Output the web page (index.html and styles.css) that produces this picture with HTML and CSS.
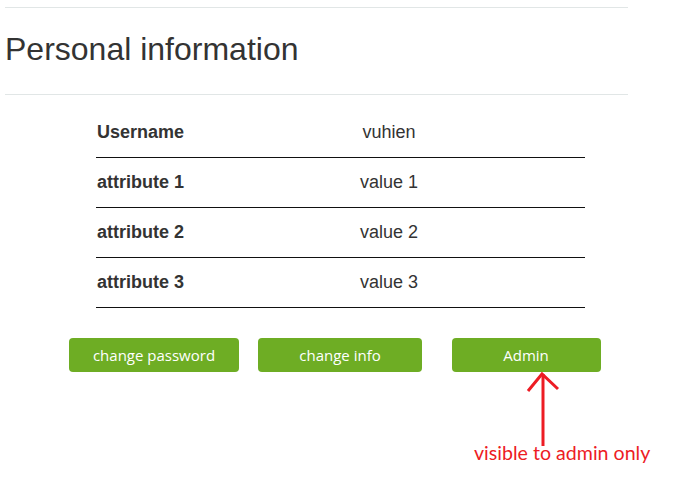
FILE: index.html
```html
<!DOCTYPE html>
<html>
<head>
<meta charset="utf-8">
<link rel="stylesheet" href="styles.css">
</head>
<body>
<div class="page">
  <hr class="rule">
  <h2 class="title">Personal information</h2>
  <hr class="rule">
  <table class="info">
    <tr><td class="attr">Username</td><td class="val">vuhien</td></tr>
    <tr><td class="attr">attribute 1</td><td class="val">value 1</td></tr>
    <tr><td class="attr">attribute 2</td><td class="val">value 2</td></tr>
    <tr><td class="attr">attribute 3</td><td class="val">value 3</td></tr>
  </table>
  <div class="actions">
    <div class="cell"><button class="btn btn-pw">change password</button></div>
    <div class="cell"><button class="btn btn-info">change info</button></div>
    <div class="cell"><button class="btn btn-admin">Admin</button></div>
  </div>
</div>
<svg class="arrow" width="691" height="479" viewBox="0 0 691 479">
  <path d="M543 374 L543 446" stroke="#ed1c24" stroke-width="3" fill="none"/>
  <path d="M528 391 L542 374 L558 389" stroke="#ed1c24" stroke-width="3" fill="none"/>
</svg>
<div class="note">visible to admin only</div>
</body>
</html>
```
FILE: styles.css
```css
html, body {
  margin: 0;
  padding: 0;
  background: #fff;
}
body {
  font-family: "Liberation Sans", Arial, sans-serif;
  color: #333;
  width: 691px;
  height: 479px;
  position: relative;
  overflow: hidden;
}
.page {
  padding: 7px 0 0 5px;
  width: 623px;
}
.rule {
  border: 0;
  border-top: 1px solid #e1e6e6;
  margin: 0;
  height: 0;
}
.title {
  font-size: 32px;
  font-weight: normal;
  line-height: 35px;
  margin: 24px 0 27px 0;
  color: #333;
}
.info {
  border-collapse: collapse;
  margin: 13px 0 0 91px;
  width: 489px;
  font-size: 18px;
}
.info td {
  height: 49px;
  padding: 0;
  border-bottom: 1px solid #111;
  vertical-align: middle;
}
.attr {
  font-weight: bold;
  padding-left: 1px !important;
  width: 96px;
  white-space: nowrap;
}
.val {
  text-align: center;
}
.actions {
  display: grid;
  grid-template-columns: 186px 186px 186px;
  margin: 30px 0 0 56px;
}
.cell {
  display: flex;
  justify-content: center;
}
.btn {
  background: #6ead24;
  color: #fff;
  border: 0;
  border-radius: 4px;
  height: 34px;
  font-family: "Open Sans", sans-serif;
  font-size: 15px;
  padding: 0;
}
.btn-pw { width: 170px; }
.btn-info { width: 164px; }
.btn-admin { width: 149px; }
.arrow {
  position: absolute;
  left: 0;
  top: 0;
}
.note {
  position: absolute;
  left: 474px;
  top: 441px;
  font-family: Lato, sans-serif;
  font-size: 19.6px;
  color: #ed1c24;
}
```
